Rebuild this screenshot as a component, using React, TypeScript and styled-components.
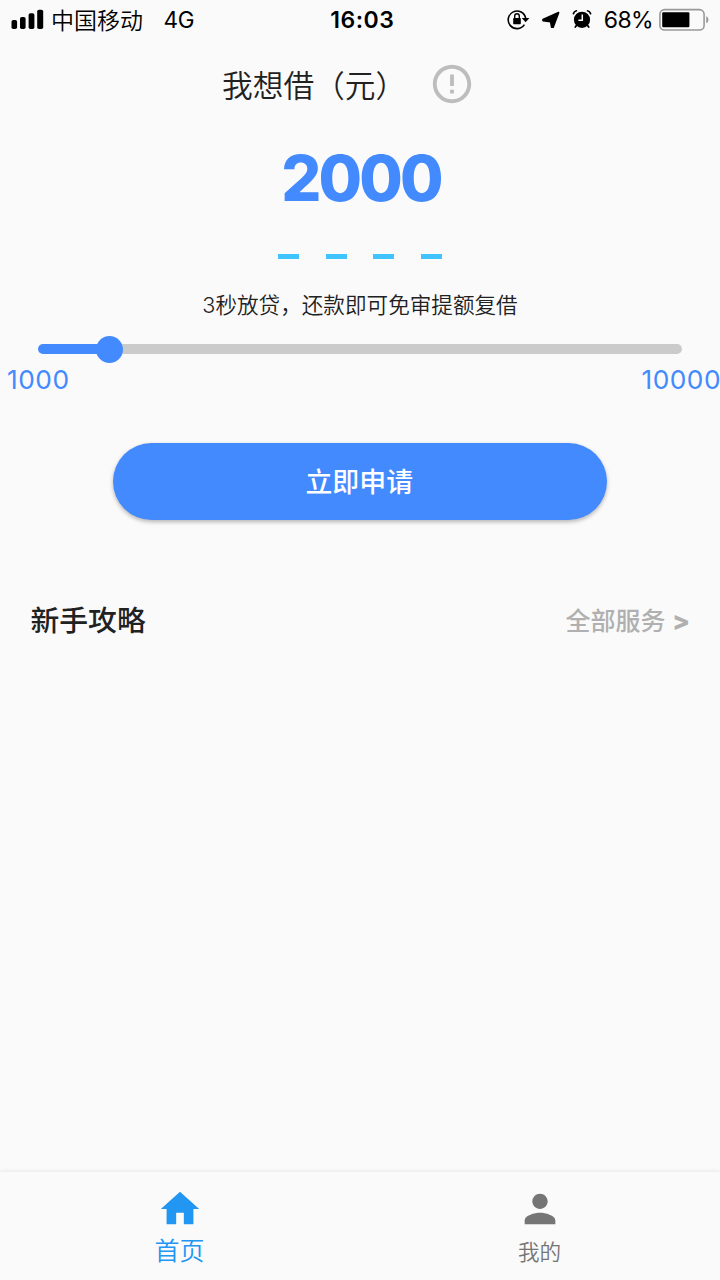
import React from 'react';
import styled, { createGlobalStyle } from 'styled-components';

const GlobalStyle = createGlobalStyle`
  * { box-sizing: border-box; }
  body {
    margin: 0;
    background: #fafafa;
    color: #212121;
    font-family: Inter, "Noto Sans CJK SC", sans-serif;
  }
`;

const Screen = styled.div`
  display: flex;
  flex-direction: column;
  width: 720px;
  height: 1280px;
  overflow: hidden;
  background: #fafafa;
`;

const StatusBar = styled.header`
  display: grid;
  grid-template-columns: 1fr auto 1fr;
  align-items: center;
  height: 40px;
  padding: 0 10px 0 11px;
  color: #000;
  font-size: 23px;
  line-height: 40px;
  white-space: nowrap;
`;

const StatusGroup = styled.div<{ $end?: boolean }>`
  display: flex;
  align-items: center;
  height: 40px;
  justify-content: ${(p) => (p.$end ? 'flex-end' : 'flex-start')};
`;

const Carrier = styled.span`
  margin-left: 7px;
  padding-top: 1px;
  font-weight: 350;
`;

const Network = styled.span`
  margin-left: 20.5px;
  font-size: 22.5px;
  letter-spacing: -0.3px;
`;

const Clock = styled.span`
  font-weight: 600;
  letter-spacing: 0.5px;
  padding-left: 3.5px;
`;

const Percent = styled.span`
  margin: 0 6px 0 12px;
  font-size: 23px;
  letter-spacing: -0.6px;
`;

const Glyph = styled.svg`
  display: block;
  flex: none;
`;

const Main = styled.main`
  flex: 1;
  display: flex;
  flex-direction: column;
`;

const TitleRow = styled.div`
  display: flex;
  align-items: center;
  height: 46px;
  margin-top: 21px;
  padding-left: 222px;
`;

const Title = styled.h1`
  width: 207px;
  margin: 0;
  padding-top: 3px;
  font-size: 30.7px;
  font-weight: 350;
  line-height: 46px;
`;

const Amount = styled.div`
  margin-top: 31px;
  height: 80px;
  line-height: 80px;
  padding-left: 2px;
  text-align: center;
  font-size: 63px;
  font-weight: 800;
  letter-spacing: -2.9px;
  color: #448aff;
`;

const Dashes = styled.div`
  display: flex;
  justify-content: center;
  gap: 26.9px;
  margin-top: 35.5px;
`;

const Dash = styled.span`
  width: 20.8px;
  height: 5.4px;
  background: #40c4ff;
`;

const Tagline = styled.p`
  margin: 30px 0 0;
  height: 33px;
  line-height: 32px;
  text-align: center;
  font-size: 21.6px;
  font-weight: 350;
`;

const Slider = styled.div`
  display: flex;
  align-items: center;
  height: 27px;
  margin: 14px 38px 0;
`;

const Filled = styled.div`
  width: 60px;
  height: 10px;
  border-radius: 5px 0 0 5px;
  background: #448aff;
`;

const Thumb = styled.div`
  width: 27px;
  height: 27px;
  margin: 0 -2px;
  border-radius: 50%;
  background: #448aff;
  z-index: 1;
`;

const Rest = styled.div`
  flex: 1;
  height: 10px;
  border-radius: 0 5px 5px 0;
  background: #cbcbcb;
`;

const Limits = styled.div`
  display: flex;
  justify-content: space-between;
  height: 34px;
  padding-left: 7px;
  line-height: 34px;
  font-size: 26.3px;
  letter-spacing: 0.5px;
  color: #448aff;

  span:last-child {
    margin-right: -1px;
  }
`;

const Apply = styled.button`
  align-self: center;
  width: 494px;
  height: 77px;
  margin-top: 46px;
  padding: 1px 1.5px 0 0;
  border: 0;
  border-radius: 39px;
  background: #448aff;
  box-shadow: 0 2px 4px rgba(0, 0, 0, 0.28);
  color: #fff;
  font-family: inherit;
  font-size: 26.9px;
  font-weight: 500;
  line-height: 77px;
`;

const SectionHead = styled.div`
  display: flex;
  align-items: center;
  justify-content: space-between;
  height: 46px;
  margin-top: 76px;
  padding: 0 30px 0 30.5px;
`;

const SectionTitle = styled.h2`
  margin: 0;
  font-size: 28.8px;
  font-weight: 500;
`;

const More = styled.a`
  color: #b0b0b0;
  font-size: 25px;
  font-weight: 500;
`;

const MoreArrow = styled.span`
  font-size: 26px;
  font-weight: 800;
`;

const TabBar = styled.nav`
  display: flex;
  height: 108px;
  background: #fafafa;
  box-shadow: 0 -1px 4px rgba(0, 0, 0, 0.08);
`;

const Tab = styled.div<{ $active?: boolean }>`
  flex: 1;
  display: flex;
  flex-direction: column;
  align-items: center;
  padding-top: 14px;
  color: ${(p) => (p.$active ? '#2196f3' : '#757575')};
  font-size: ${(p) => (p.$active ? 25 : 21.6)}px;
  font-weight: 350;
`;

const TabLabel = styled.span<{ $drop?: number }>`
  height: 36px;
  line-height: 36px;
  margin-top: ${(p) => p.$drop ?? 0}px;
  padding-right: 1px;
`;

const SignalIcon = () => (
  <Glyph width="33" height="40" viewBox="0 0 33 40">
    <rect x="0.5" y="20" width="5.6" height="9" rx="1.8" />
    <rect x="9" y="17" width="5.6" height="12" rx="1.8" />
    <rect x="17.6" y="13.3" width="5.8" height="15.7" rx="1.8" />
    <rect x="26.2" y="9.7" width="6" height="19.3" rx="1.8" />
  </Glyph>
);

const RotationLockIcon = () => (
  <Glyph width="23" height="40" viewBox="0 0 23 40">
    <path d="M17.4 24.6A8.8 8.8 0 1 1 18.7 18.4" fill="none" stroke="#000" strokeWidth="1.6" />
    <path d="M14.8 18h7.6l-3.8 4.3z" />
    <rect x="6.2" y="18" width="7.6" height="6.2" rx="0.8" />
    <path d="M7.7 18.5v-2.4a2.3 2.3 0 0 1 4.6 0v2.4" fill="none" stroke="#000" strokeWidth="1.4" />
  </Glyph>
);

const LocationIcon = () => (
  <Glyph width="19" height="40" viewBox="0 0 19 40">
    <path
      d="M17.6 12.6 12.2 27.2 10.6 27.2 9.6 21.6 2 20.8 2 19.6z"
      stroke="#000"
      strokeWidth="1.6"
      strokeLinejoin="round"
    />
  </Glyph>
);

const AlarmIcon = () => (
  <Glyph width="20" height="40" viewBox="0 0 20 40">
    <circle cx="10" cy="19.8" r="8.1" />
    <path d="m4.8 25-1.5 2M15.2 25l1.5 2" stroke="#000" strokeWidth="1.8" strokeLinecap="round" />
    <path d="M1.4 13.6C1.9 12.3 3 11.2 4.4 10.8M18.6 13.6c-.5-1.3-1.6-2.4-3-2.8" fill="none" stroke="#000" strokeWidth="1.7" strokeLinecap="round" />
    <path d="M10.3 14.6v5.7H6.4" fill="none" stroke="#fafafa" strokeWidth="1.5" />
  </Glyph>
);

const BatteryIcon = () => (
  <Glyph width="51" height="40" viewBox="0 0 51 40">
    <rect x="0.9" y="9.6" width="44.2" height="20.4" rx="4.6" fill="none" stroke="#999" strokeWidth="1.6" />
    <rect x="3.2" y="12.3" width="27.2" height="15" rx="1.2" />
    <path d="M47.2 16.3c3 1.2 3 5.8 0 7z" fill="#999" />
  </Glyph>
);

const NoticeIcon = () => (
  <Glyph width="46" height="46" viewBox="0 0 24 24" fill="#bdbdbd">
    <path d="M11 15h2v2h-2zm0-8h2v6h-2zm.99-5C6.47 2 2 6.48 2 12s4.47 10 9.99 10C17.52 22 22 17.52 22 12S17.52 2 11.99 2zM12 20c-4.42 0-8-3.58-8-8s3.58-8 8-8 8 3.58 8 8-3.58 8-8 8z" />
  </Glyph>
);

const HomeIcon = () => (
  <Glyph width="46" height="46" viewBox="0 0 24 24" fill="currentColor">
    <path d="M10 20v-6h4v6h5v-8h3L12 3 2 12h3v8z" />
  </Glyph>
);

const PersonIcon = () => (
  <Glyph width="46" height="46" viewBox="0 0 24 24" fill="currentColor">
    <path d="M12 12c2.21 0 4-1.79 4-4s-1.79-4-4-4-4 1.79-4 4 1.79 4 4 4zm0 2c-2.67 0-8 1.34-8 4v2h16v-2c0-2.66-5.33-4-8-4z" />
  </Glyph>
);

const StatusIcons = styled.div`
  display: flex;
  gap: 11.5px;
`;

export default function App() {
  return (
    <Screen>
      <GlobalStyle />
      <StatusBar>
        <StatusGroup>
          <SignalIcon />
          <Carrier>中国移动</Carrier>
          <Network>4G</Network>
        </StatusGroup>
        <Clock>16:03</Clock>
        <StatusGroup $end>
          <StatusIcons>
            <RotationLockIcon />
            <LocationIcon />
            <AlarmIcon />
          </StatusIcons>
          <Percent>68%</Percent>
          <BatteryIcon />
        </StatusGroup>
      </StatusBar>
      <Main>
        <TitleRow>
          <Title>我想借（元）</Title>
          <NoticeIcon />
        </TitleRow>
        <Amount>2000</Amount>
        <Dashes>
          <Dash />
          <Dash />
          <Dash />
          <Dash />
        </Dashes>
        <Tagline>3秒放贷，还款即可免审提额复借</Tagline>
        <Slider>
          <Filled />
          <Thumb />
          <Rest />
        </Slider>
        <Limits>
          <span>1000</span>
          <span>10000</span>
        </Limits>
        <Apply>立即申请</Apply>
        <SectionHead>
          <SectionTitle>新手攻略</SectionTitle>
          <More>
            全部服务 <MoreArrow>&gt;</MoreArrow>
          </More>
        </SectionHead>
      </Main>
      <TabBar>
        <Tab $active>
          <HomeIcon />
          <TabLabel $drop={1}>首页</TabLabel>
        </Tab>
        <Tab>
          <PersonIcon />
          <TabLabel $drop={2}>我的</TabLabel>
        </Tab>
      </TabBar>
    </Screen>
  );
}
